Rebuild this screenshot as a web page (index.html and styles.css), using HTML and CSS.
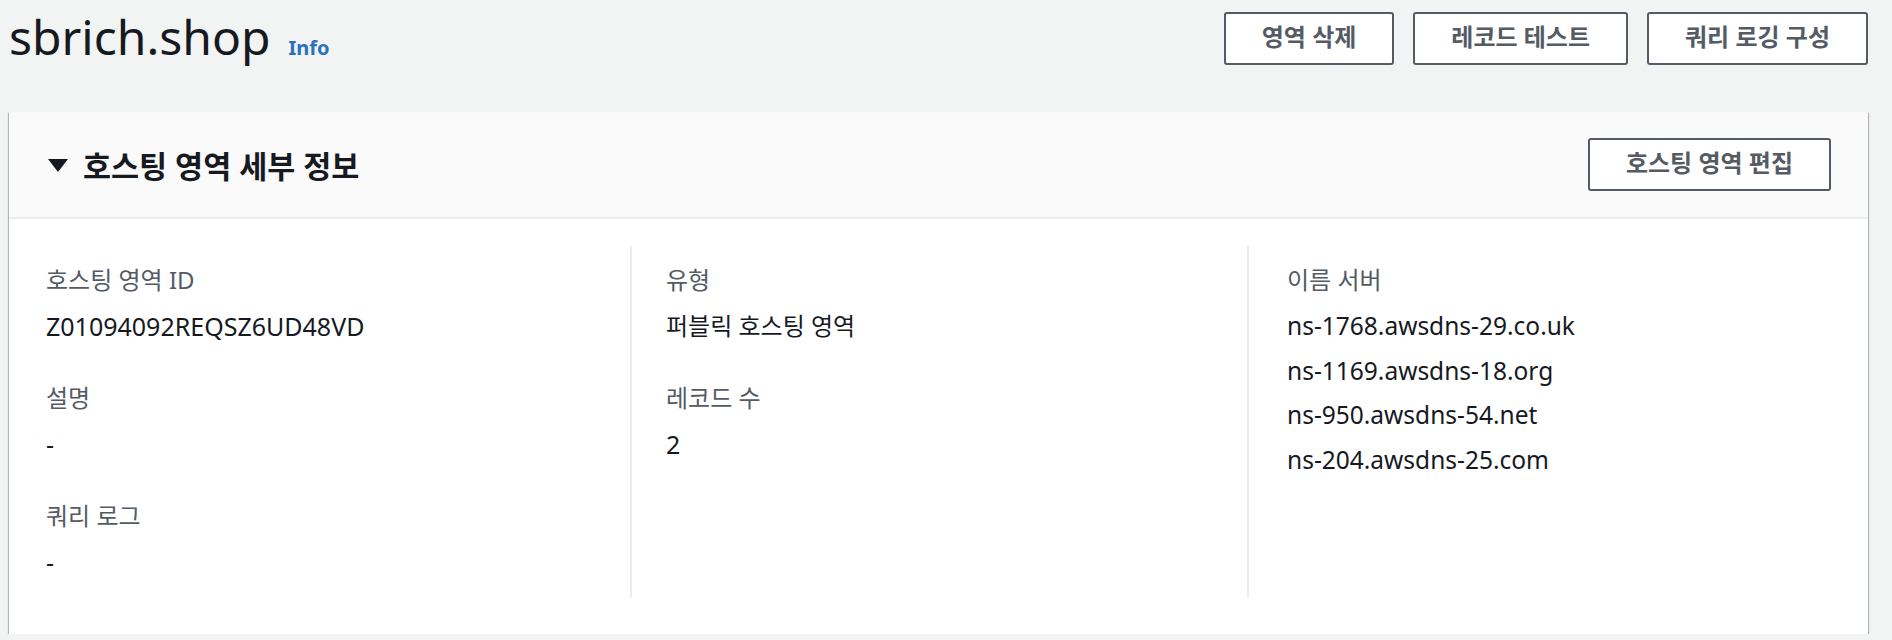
FILE: index.html
```html
<!DOCTYPE html>
<html lang="ko">
<head>
<meta charset="utf-8">
<title>sbrich.shop</title>
<link rel="stylesheet" href="styles.css">
</head>
<body>
<div class="page">
  <header class="page-header">
    <div class="title-group">
      <h1 class="title">sbrich.shop</h1>
      <a class="info" href="#">Info</a>
    </div>
    <div class="actions">
      <button class="btn">영역 삭제</button>
      <button class="btn">레코드 테스트</button>
      <button class="btn">쿼리 로깅 구성</button>
    </div>
  </header>

  <section class="card">
    <div class="card-header">
      <h2 class="card-title"><span class="caret"></span>호스팅 영역 세부 정보</h2>
      <button class="btn">호스팅 영역 편집</button>
    </div>
    <div class="card-body">
      <div class="col">
        <div class="kv">
          <div class="label">호스팅 영역 ID</div>
          <div class="value">Z01094092REQSZ6UD48VD</div>
        </div>
        <div class="kv">
          <div class="label">설명</div>
          <div class="value">-</div>
        </div>
        <div class="kv">
          <div class="label">쿼리 로그</div>
          <div class="value">-</div>
        </div>
      </div>
      <div class="col">
        <div class="kv">
          <div class="label">유형</div>
          <div class="value ko">퍼블릭 호스팅 영역</div>
        </div>
        <div class="kv">
          <div class="label">레코드 수</div>
          <div class="value">2</div>
        </div>
      </div>
      <div class="col">
        <div class="kv">
          <div class="label">이름 서버</div>
          <div class="value ns">ns-1768.awsdns-29.co.uk</div>
          <div class="value ns">ns-1169.awsdns-18.org</div>
          <div class="value ns">ns-950.awsdns-54.net</div>
          <div class="value ns">ns-204.awsdns-25.com</div>
        </div>
      </div>
    </div>
  </section>
</div>
</body>
</html>
```

FILE: styles.css
```css
html, body {
  margin: 0;
  padding: 0;
  background: #f2f3f3;
}

body {
  font-family: "Noto Sans", "Noto Sans CJK KR", sans-serif;
  color: #16191f;
}

.page {
  padding: 12px 24px 0 9px;
}

.page-header {
  display: flex;
  justify-content: space-between;
  align-items: center;
  height: 53px;
}

.title-group {
  display: flex;
  align-items: baseline;
  gap: 18px;
  margin-bottom: 4px;
}

.title {
  margin: 0;
  font-size: 48px;
  font-weight: 400;
  line-height: 49px;
  color: #16191f;
}

.info {
  font-size: 20px;
  font-weight: 700;
  color: #2a71c0;
  text-decoration: none;
}

.actions {
  display: flex;
  gap: 19px;
}

.btn {
  height: 53px;
  padding: 0 36px 3px;
  border: 2px solid #545b64;
  border-radius: 3px;
  background: #ffffff;
  color: #545b64;
  font-family: "Noto Sans", "Noto Sans CJK KR", sans-serif;
  font-size: 24px;
  font-weight: 700;
  line-height: 1;
  cursor: pointer;
}

.card {
  margin-top: 47px;
  background: #ffffff;
  box-shadow: 0 1px 1px 0 rgba(0, 28, 36, 0.4),
              1px 1px 1px 0 rgba(0, 28, 36, 0.22),
              -1px 1px 1px 0 rgba(0, 28, 36, 0.22);
}

.card-header {
  display: flex;
  justify-content: space-between;
  align-items: center;
  padding: 26px 37px 26px 39px;
  background: #fafafa;
  border-bottom: 2px solid #eaeded;
}

.card-title {
  display: flex;
  align-items: center;
  gap: 15px;
  margin: 0;
  padding-top: 2px;
  font-size: 30.5px;
  font-weight: 700;
  line-height: 50px;
  color: #16191f;
}

.caret {
  width: 0;
  height: 0;
  border-left: 10px solid transparent;
  border-right: 10px solid transparent;
  border-top: 13px solid #16191f;
}

.card-body {
  display: grid;
  grid-template-columns: repeat(3, 1fr);
  padding: 27px 4px 36px 4px;
}

.col {
  padding: 14px 34px;
  border-left: 2px solid #eaeded;
}

.col:first-child {
  padding-left: 31px;
  border-left-color: transparent;
}

.col:last-child {
  padding-left: 38px;
}

.kv + .kv {
  margin-top: 30px;
}

.label {
  font-size: 24px;
  line-height: 40px;
  padding-bottom: 4px;
  color: #545b64;
}

.value {
  font-size: 25px;
  line-height: 44px;
  color: #16191f;
}

.value.ko {
  font-size: 24px;
}

.value.ns {
  font-size: 24.5px;
  line-height: 44.6px;
}
```
